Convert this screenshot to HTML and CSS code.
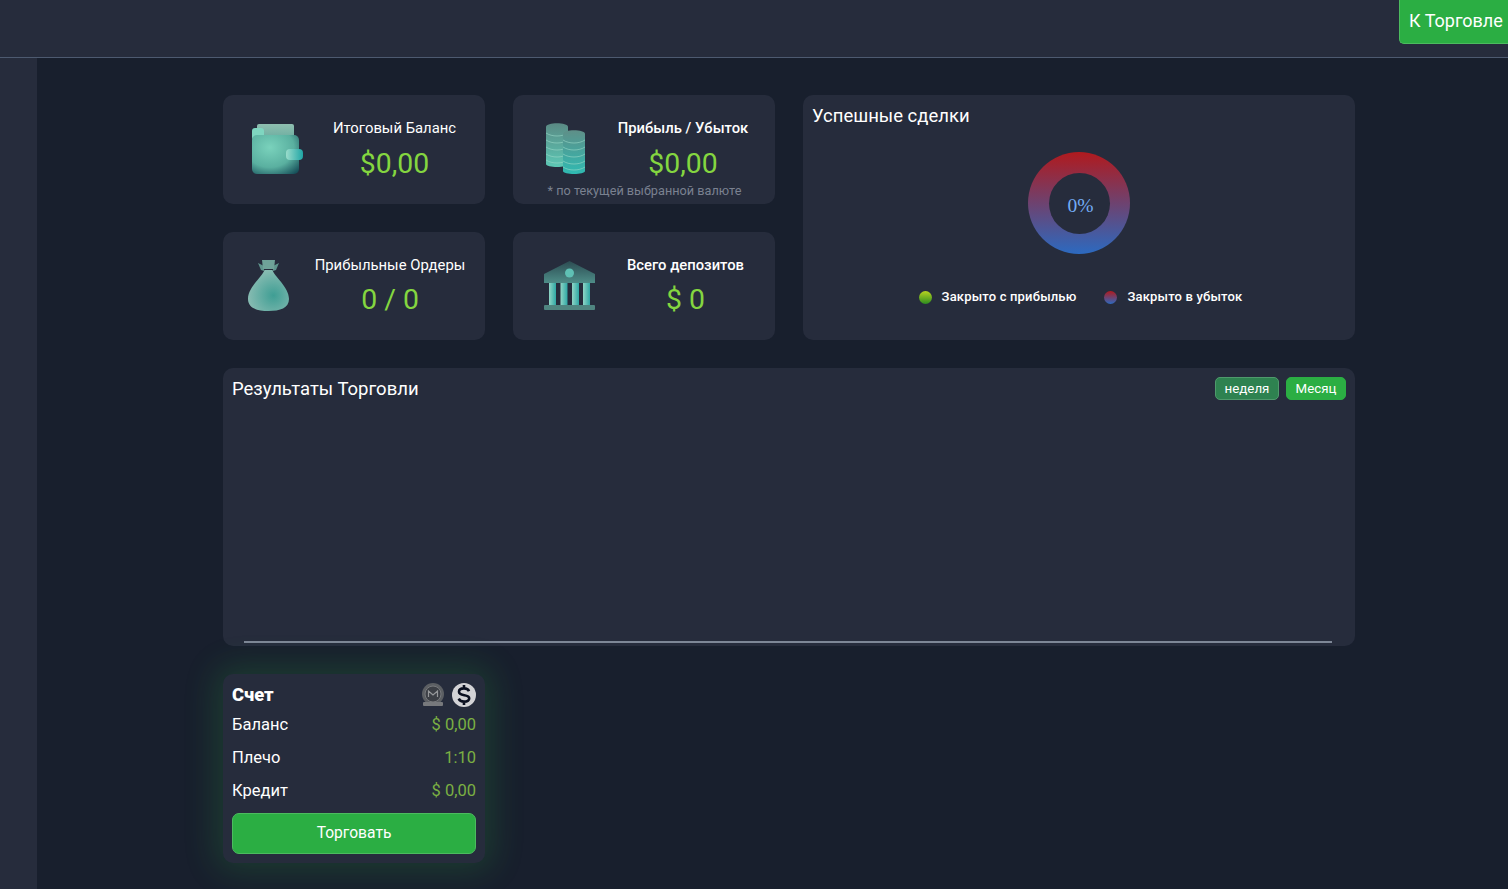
FILE: index.html
```html
<!DOCTYPE html>
<html lang="ru">
<head>
<meta charset="utf-8">
<title>Панель</title>
<link rel="stylesheet" href="styles.css">
</head>
<body>
<svg class="defs" width="0" height="0" aria-hidden="true">
  <defs>
    <linearGradient id="tealV" x1="0" y1="0" x2="0" y2="1"><stop offset="0" stop-color="#5f8f88"/><stop offset="1" stop-color="#2fbab2"/></linearGradient>
    <linearGradient id="tealV2" x1="0" y1="0" x2="0" y2="1"><stop offset="0" stop-color="#5a8a84"/><stop offset="1" stop-color="#5cc8b5"/></linearGradient>
    <radialGradient id="wallet" cx=".38" cy=".32" r=".85"><stop offset="0" stop-color="#7ad2bc"/><stop offset=".6" stop-color="#5ab0a0"/><stop offset="1" stop-color="#17505a"/></radialGradient>
    <linearGradient id="walletBack" x1="0" y1="0" x2="0" y2="1"><stop offset="0" stop-color="#8fbfb0"/><stop offset="1" stop-color="#5fa69a"/></linearGradient>
    <linearGradient id="clasp" x1="0" y1="0" x2="1" y2="0"><stop offset="0" stop-color="#9adccb"/><stop offset="1" stop-color="#1fa5a5"/></linearGradient>
    <radialGradient id="bag" cx=".62" cy=".62" r=".65"><stop offset="0" stop-color="#3f9e94"/><stop offset="1" stop-color="#8abdb3"/></radialGradient>
    <linearGradient id="roof" x1="0" y1="0" x2="0" y2="1"><stop offset="0" stop-color="#2c4c52"/><stop offset="1" stop-color="#4e8d88"/></linearGradient>
    <linearGradient id="col" x1="0" y1="0" x2="1" y2="0"><stop offset="0" stop-color="#8fd5c5"/><stop offset="1" stop-color="#2fa8a5"/></linearGradient>
  </defs>
</svg>
<header class="topbar">
  <button class="btn-trade-top">К Торговле</button>
</header>
<div class="shell">
  <aside class="sidebar"></aside>
  <main class="content">
    <section class="summary">
      <article class="card stat">
        <svg class="stat-icon" width="56" height="56" viewBox="0 0 56 56">
          <rect x="7" y="2" width="37" height="20" rx="2" fill="url(#walletBack)"/>
          <rect x="2" y="6" width="12" height="12" rx="3" fill="#7fd6c0"/>
          <rect x="2" y="13" width="47" height="39" rx="5" fill="url(#wallet)"/>
          <rect x="36" y="27" width="17" height="11" rx="4" fill="url(#clasp)"/>
        </svg>
        <div class="stat-body stat-body-a">
          <div class="stat-title">Итоговый Баланс</div>
          <div class="stat-value">$0,00</div>
        </div>
      </article>
      <article class="card stat stat-noted">
        <svg class="stat-icon" width="56" height="56" viewBox="0 0 56 56">
          <path d="M6 5c0-5 22-5 22 0v37c0 4-22 4-22 0z" fill="url(#tealV2)"/>
          <path d="M6 11c6 4 16 4 22 0M6 18c6 4 16 4 22 0M6 25c6 4 16 4 22 0M6 32c6 4 16 4 22 0M6 38c6 4 16 4 22 0" fill="none" stroke="#9ad8c8" stroke-width="1" opacity=".6"/>
          <path d="M23 12c0-5 22-5 22 0v37c0 4-22 4-22 0z" fill="url(#tealV)"/>
          <path d="M23 18c6 4 16 4 22 0M23 25c6 4 16 4 22 0M23 32c6 4 16 4 22 0M23 39c6 4 16 4 22 0M23 45c6 4 16 4 22 0" fill="none" stroke="#9ad8c8" stroke-width="1" opacity=".6"/>
        </svg>
        <div class="stat-body stat-body-b">
          <div class="stat-title stat-title-strong">Прибыль / Убыток</div>
          <div class="stat-value">$0,00</div>
        </div>
        <div class="stat-note">* по текущей выбранной валюте</div>
      </article>
      <article class="card deals">
        <h2 class="card-title">Успешные сделки</h2>
        <div class="donut"><div class="donut-hole">0%</div></div>
        <ul class="legend">
          <li class="legend-item"><span class="dot dot-profit"></span>Закрыто с прибылью</li>
          <li class="legend-item"><span class="dot dot-loss"></span>Закрыто в убыток</li>
        </ul>
      </article>
      <article class="card stat">
        <svg class="stat-icon stat-icon-bag" width="41" height="53" viewBox="0 0 41 53">
          <path d="M10 4l6 3v5l-3-1z" fill="#5f958d"/>
          <path d="M31 4l-6 3v5l3-1z" fill="#5f958d"/>
          <path d="M14 1h13l-1 9h-11z" fill="#6fa399"/>
          <path d="M16.500 11h8c1.500 6 16.500 17 16.500 29 0 9-9 12-20.500 12S0 49 0 40c0-12 15-23 16.500-29z" fill="url(#bag)"/>
        </svg>
        <div class="stat-body stat-body-c">
          <div class="stat-title">Прибыльные Ордеры</div>
          <div class="stat-value stat-value-low">0 / 0</div>
        </div>
      </article>
      <article class="card stat">
        <svg class="stat-icon" width="56" height="56" viewBox="0 0 56 56">
          <path d="M29.500 2L55 15v9H4v-9z" fill="url(#roof)"/>
          <circle cx="29.500" cy="14" r="4.500" fill="#5fc0b4"/>
          <rect x="9" y="24" width="7" height="22" fill="url(#col)"/>
          <rect x="20.500" y="24" width="7" height="22" fill="url(#col)"/>
          <rect x="32" y="24" width="7" height="22" fill="url(#col)"/>
          <rect x="43" y="24" width="7" height="22" fill="url(#col)"/>
          <rect x="4" y="46" width="51" height="5" rx="1" fill="#4f8580"/>
        </svg>
        <div class="stat-body stat-body-d">
          <div class="stat-title stat-title-strong">Всего депозитов</div>
          <div class="stat-value stat-value-low">$ 0</div>
        </div>
      </article>
    </section>
    <section class="card results">
      <div class="results-head">
        <h2 class="card-title">Результаты Торговли</h2>
        <div class="range">
          <button class="chip chip-muted">неделя</button>
          <button class="chip chip-active">Месяц</button>
        </div>
      </div>
      <div class="chart"><div class="axis"></div></div>
    </section>
    <section class="card account">
      <div class="account-head">
        <h3 class="account-title">Счет</h3>
        <div class="account-icons">
          <svg width="24" height="24" viewBox="0 0 24 24">
            <circle cx="12" cy="11" r="11" fill="#5c5f63"/>
            <circle cx="12" cy="11" r="8" fill="#3c3f45" stroke="#77797c"/>
            <path d="M7.500 14V8l4.500 4 4.500-4v6" fill="none" stroke="#96989a" stroke-width="1.200"/>
            <rect x="2" y="19" width="20" height="4" rx="1" fill="#77797c"/>
          </svg>
          <svg width="24" height="24" viewBox="0 0 24 24">
            <circle cx="12" cy="12" r="12" fill="#d3d3d6"/>
            <path d="M17 8.200C16.300 6.300 14.300 5.400 12 5.400c-2.800 0-5 1.200-5 3.300 0 5 10.200 2 10.200 6.500 0 2.200-2.400 3.400-5.200 3.400-2.500 0-4.400-1-5.300-3M12 2v3.500M12 18.500V22" fill="none" stroke="#0b1020" stroke-width="2.600"/>
          </svg>
        </div>
      </div>
      <dl class="account-rows">
        <div class="account-row"><dt>Баланс</dt><dd>$ 0,00</dd></div>
        <div class="account-row"><dt>Плечо</dt><dd>1:10</dd></div>
        <div class="account-row"><dt>Кредит</dt><dd>$ 0,00</dd></div>
      </dl>
      <button class="btn-trade">Торговать</button>
    </section>
  </main>
</div>
</body>
</html>
```
FILE: styles.css
```css
* { box-sizing: border-box; }
html, body { margin: 0; height: 100%; }
body {
  background: #181f2d;
  color: #fff;
  font-family: Roboto, "Liberation Sans", sans-serif;
  overflow: hidden;
}
.defs { position: absolute; }
button { font-family: inherit; cursor: pointer; }
h2, h3, dl, dd, ul { margin: 0; padding: 0; }

.topbar {
  height: 58px;
  background: #262c3c;
  border-bottom: 1px solid #4d5a70;
  display: flex;
  justify-content: flex-end;
  align-items: flex-start;
}
.btn-trade-top {
  height: 44px;
  width: 109px;
  padding: 0 0 2px 9px;
  text-align: left;
  font-size: 18px;
  color: #fff;
  background: #2bae43;
  border: 1px solid #4cbb5f;
  border-top: 0;
  border-right: 0;
  border-radius: 0 0 0 5px;
  white-space: nowrap;
}

.shell { display: flex; height: 831px; }
.sidebar { width: 37px; background: #262c3c; flex: none; }
.content {
  flex: 1;
  padding: 37px 0 0 186px;
  display: flex;
  flex-direction: column;
  gap: 28px;
}

.card { background: #262c3c; border-radius: 10px; }
.summary {
  width: 1132px;
  display: grid;
  grid-template-columns: 262px 262px 552px;
  grid-template-rows: 109px 108px;
  gap: 28px;
}
.stat {
  position: relative;
  display: flex;
  align-items: flex-start;
}
.stat-icon { flex: none; position: absolute; left: 27px; top: 27px; }
.stat-icon-bag { left: 25px; }
.stat-body {
  width: 100%;
  padding-top: 23px;
  display: flex;
  flex-direction: column;
  align-items: center;
}
.stat-body-a { padding-left: 81px; }
.stat-body-b { padding-left: 78px; }
.stat-body-c { padding-left: 72px; }
.stat-body-d { padding-left: 83px; }
.stat-title { font-size: 14.850px; line-height: 20px; white-space: nowrap; }
.stat-title-strong { font-weight: 500; font-size: 14.800px; }
.stat-value {
  margin-top: 8px;
  font-size: 28.400px;
  line-height: 36px;
  color: #84d640;
  white-space: nowrap;
}
.stat-value-low { margin-top: 7px; }
.stat-note {
  position: absolute;
  left: 0;
  right: 0;
  bottom: 5px;
  padding-left: 1px;
  text-align: center;
  font-size: 12.700px;
  line-height: 16px;
  color: #7a8190;
  white-space: nowrap;
}

.deals {
  grid-column: 3;
  grid-row: 1 / 3;
  padding: 9px;
  display: flex;
  flex-direction: column;
  align-items: center;
}
.card-title {
  font-size: 18.500px;
  line-height: 24px;
  font-weight: 400;
  white-space: nowrap;
}
.deals .card-title { align-self: flex-start; }
.donut {
  width: 102px;
  height: 102px;
  margin-top: 24px;
  border-radius: 50%;
  background: linear-gradient(180deg, #b01a1e 0%, #2c6ac0 100%);
  display: flex;
  align-items: center;
  justify-content: center;
}
.donut-hole {
  width: 61px;
  height: 61px;
  border-radius: 50%;
  background: #262c3c;
  color: #74adf5;
  font-family: "Liberation Serif", serif;
  font-size: 19.500px;
  line-height: 65px;
  text-align: center;
  padding-left: 3px;
}
.legend {
  list-style: none;
  margin-top: 34px;
  padding-left: 3px;
  display: flex;
  gap: 28px;
}
.legend-item {
  display: flex;
  align-items: center;
  gap: 10px;
  font-size: 13px;
  font-weight: 500;
  letter-spacing: .17px;
  line-height: 18px;
}
.dot { width: 13px; height: 13px; border-radius: 50%; }
.dot-profit { background: linear-gradient(180deg, #b8d420, #2c8c20); }
.dot-loss { background: linear-gradient(180deg, #b01a1e, #2c6ac0); }

.results {
  width: 1132px;
  height: 278px;
  padding: 9px 9px 0;
  display: flex;
  flex-direction: column;
}
.results-head { display: flex; justify-content: space-between; align-items: flex-start; }
.range { display: flex; gap: 7px; }
.chip {
  height: 23px;
  padding: 0;
  font-size: 13.300px;
  font-weight: 400;
  color: #fff;
  border-radius: 5px;
}
.chip-muted { width: 64px; background: #2e8250; border: 1px solid #4f9a6c; }
.chip-active { width: 60px; background: #2bae43; border: 1px solid #2bae43; }
.chart { flex: 1; display: flex; align-items: flex-end; padding: 0 14px 3px 12px; }
.axis { flex: 1; height: 2px; background: #7e8797; }

.account {
  width: 262px;
  height: 189px;
  padding: 9px;
  box-shadow: 0 0 32px 8px rgba(43, 174, 67, .2);
}
.account-head { display: flex; justify-content: space-between; align-items: center; height: 24px; }
.account-title { font-size: 18.300px; font-weight: 900; line-height: 24px; }
.account-icons { display: flex; gap: 7px; }
.account-rows { margin-top: 6px; }
.account-row {
  display: flex;
  justify-content: space-between;
  height: 33px;
  font-size: 16.500px;
  line-height: 24px;
  font-weight: 400;
}
.account-row dd { color: #7bb043; }
.btn-trade {
  display: block;
  width: 100%;
  height: 41px;
  margin-top: 1px;
  padding-bottom: 2px;
  font-size: 15.600px;
  color: #fff;
  background: #2bae43;
  border: 1px solid #4cbb5f;
  border-radius: 7px;
}
```
